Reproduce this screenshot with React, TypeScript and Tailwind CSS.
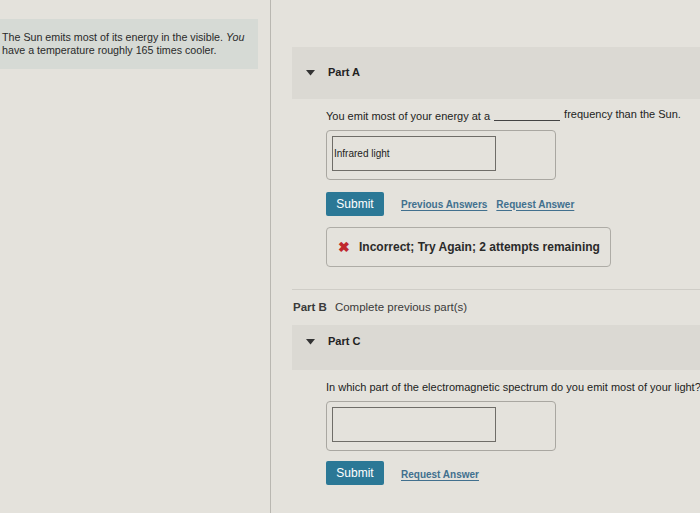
import React from 'react';

const Caret = () => (
    <svg width="9" height="6" viewBox="0 0 9 6" className="shrink-0">
        <path d="M0 0 L9 0 L4.5 5.5 Z" fill="#333" />
    </svg>
);

const PartHeader = ({ label, short }: { label: string; short?: boolean }) => (
    <div
        className={
            short
                ? 'flex h-[45px] items-start bg-[#dbd9d3] pl-[14px] pt-[10px]'
                : 'flex h-[52px] items-start bg-[#dbd9d3] pl-[14px] pt-[19px]'
        }
    >
        <div className="flex items-center">
            <Caret />
            <span className="ml-[13px] text-[11px] font-bold leading-[13px] text-[#222]">{label}</span>
        </div>
    </div>
);

const AnswerBox = ({ value }: { value?: string }) => (
    <div className="h-[50px] w-[230px] rounded-[4px] border border-[#a9a7a1] px-[5px] pt-[5px]">
        <div className="flex h-[35px] w-[164px] items-center border border-[#6f6d68] px-[1px] text-[10px] text-[#222]">
            {value}
        </div>
    </div>
);

const SubmitButton = () => (
    <button className="h-[24px] w-[58px] rounded-[2px] bg-[#2b7896] text-[12px] font-medium text-white">
        Submit
    </button>
);

const LinkText = ({ children }: { children: React.ReactNode }) => (
    <span className="text-[10px] font-semibold text-[#41708e] underline underline-offset-2">{children}</span>
);

export default function App() {
    return (
        <div
            className="flex h-[513px] w-[700px] overflow-hidden bg-[#e4e2dc] text-[#222]"
            style={{ fontFamily: '"Liberation Sans", Arial, sans-serif' }}
        >
            {/* left column */}
            <div className="w-[271px] shrink-0 border-r border-[#b9b7b1] pt-[19px]">
                <div className="h-[50px] w-[258px] bg-[#d6dad5] px-[2px] pt-[12px] text-[10.7px] leading-[13px] text-[#2a2a2a]">
                    The Sun emits most of its energy in the visible. <i>You</i>
                    <br />
                    have a temperature roughly 165 times cooler.
                </div>
            </div>

            {/* right column */}
            <div className="flex-1 pl-[21px] pt-[47px]">
                <PartHeader label="Part A" />

                <div className="pl-[34px]">
                    <div className="mt-[10px] flex items-end text-[11px] leading-[14px]">
                        <span>You emit most of your energy at a</span>
                        <span className="mx-[4px] mb-[2px] inline-block w-[66px] border-b border-[#444]" />
                        <span className="-translate-y-[2px]">frequency than the Sun.</span>
                    </div>

                    <div className="mt-[7px]">
                        <AnswerBox value="Infrared light" />
                    </div>

                    <div className="mt-[12px] flex items-center">
                        <SubmitButton />
                        <div className="ml-[17px] flex gap-[9px]">
                            <LinkText>Previous Answers</LinkText>
                            <LinkText>Request Answer</LinkText>
                        </div>
                    </div>

                    <div className="mt-[11px] flex h-[40px] w-[285px] items-center rounded-[4px] border border-[#aeaca6] pl-[11px]">
                        <span className="text-[14px] font-bold leading-none text-[#c0282d]">✖</span>
                        <span className="ml-[9px] text-[12px] font-bold text-[#2a2a2a]">
                            Incorrect; Try Again; 2 attempts remaining
                        </span>
                    </div>
                </div>

                <div className="mt-[22px] border-t border-[#cfcdc7]" />

                <div className="mt-[9px] flex gap-[8px] pl-[1px] text-[11.5px] text-[#3a3a3a]">
                    <span className="font-semibold">Part B</span>
                    <span>Complete previous part(s)</span>
                </div>

                <div className="mt-[9px]">
                    <PartHeader label="Part C" short />
                </div>

                <div className="pl-[34px]">
                    <div className="mt-[10px] whitespace-nowrap text-[11px] leading-[14px]">
                        In which part of the electromagnetic spectrum do you emit most of your light?
                    </div>

                    <div className="mt-[7px]">
                        <AnswerBox />
                    </div>

                    <div className="mt-[10px] flex items-center">
                        <SubmitButton />
                        <div className="ml-[17px]">
                            <LinkText>Request Answer</LinkText>
                        </div>
                    </div>
                </div>
            </div>
        </div>
    );
}
